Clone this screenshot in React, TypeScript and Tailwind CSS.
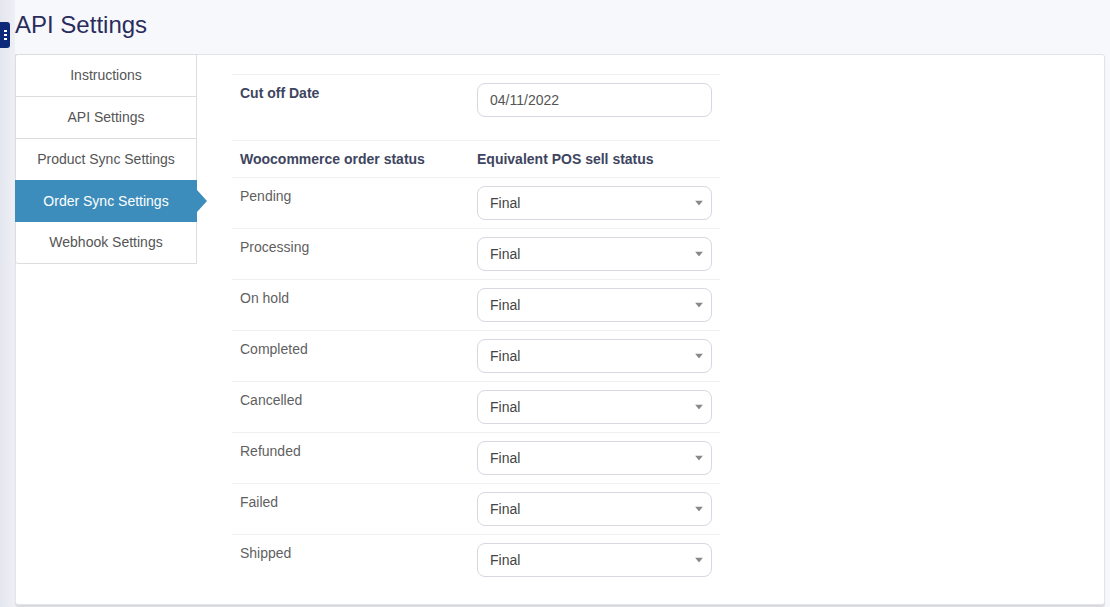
import React from "react";

const statuses = ["Pending", "Processing", "On hold", "Completed", "Cancelled", "Refunded", "Failed", "Shipped"];
const navItems = ["Instructions", "API Settings", "Product Sync Settings", "Order Sync Settings", "Webhook Settings"];

function Caret() {
  return (
    <svg width="8" height="5" viewBox="0 0 8 5" className="absolute right-[8px] top-1/2 -translate-y-1/2">
      <path d="M0 0 L8 0 L4 5 Z" fill="#888" />
    </svg>
  );
}

export default function App() {
  return (
    <div
      className="relative flex h-[607px] w-full overflow-hidden bg-[#f7f8fc] text-[14px]"
      style={{ fontFamily: '"Liberation Sans", Arial, sans-serif' }}
    >
      <div className="w-[15px] shrink-0 bg-gradient-to-r from-[#e4e6ee] to-[#eff0f6]" />
      <div className="absolute left-0 top-[22px] flex h-[26px] w-[10px] items-center justify-center rounded-r-[3px] bg-[#0d2a7a]">
        <div className="flex flex-col gap-[2px] pl-[1px]">
          <span className="block h-[2px] w-[3px] bg-white" />
          <span className="block h-[2px] w-[3px] bg-white" />
          <span className="block h-[2px] w-[3px] bg-white" />
        </div>
      </div>
      <div className="flex min-w-0 flex-1 flex-col pr-[5px]">
        <h1 className="h-[54px] pt-[11px] text-[24px] leading-[28px] text-[#2a2d5c]">API Settings</h1>
        <div className="flex h-[551px] rounded-[3px] border border-[#e3e4ea] bg-white shadow-[0_2px_1px_rgba(0,0,0,0.12)]">
          <div className="-mt-px w-[181px] shrink-0">
            {navItems.map((item, i) => {
              const active = item === "Order Sync Settings";
              return (
                <div
                  key={item}
                  className={
                    active
                      ? "relative -ml-px -mt-px flex h-[42px] items-center justify-center bg-[#3c8dbc] text-white"
                      : "-ml-px flex h-[43px] items-center justify-center border border-[#dddddd] text-[#555] " +
                        (i > 0 ? "-mt-px " : "") +
                        (i === navItems.length - 1 ? "rounded-bl-[3px]" : "")
                  }
                >
                  <span>{item}</span>
                  {active && (
                    <span className="absolute right-[-10px] top-1/2 h-0 w-0 -translate-y-1/2 border-y-[11px] border-l-[10px] border-y-transparent border-l-[#3c8dbc]" />
                  )}
                </div>
              );
            })}
          </div>
          <div className="flex-1 pl-[35px] pt-[19px]">
            <div className="w-[488px]">
              <div className="grid grid-cols-[237px_251px] border-t border-[#f0f0f0]">
                <div className="px-[8px] pt-[8px] font-bold leading-[20px] text-[#3e4560]">Cut off Date</div>
                <div className="px-[8px] pb-[23px] pt-[8px]">
                  <div className="flex h-[34px] items-center rounded-[8px] border border-[#d6d8e2] px-[12px] text-[#555]">
                    04/11/2022
                  </div>
                </div>
              </div>
              <div className="grid grid-cols-[237px_251px] border-t border-[#f0f0f0] font-bold leading-[20px] text-[#3e4560]">
                <div className="p-[8px]">Woocommerce order status</div>
                <div className="p-[8px]">Equivalent POS sell status</div>
              </div>
              {statuses.map((s) => (
                <div key={s} className="grid grid-cols-[237px_251px] border-t border-[#f0f0f0]">
                  <div className="px-[8px] pt-[8px] leading-[20px] text-[#5f5f5f]">{s}</div>
                  <div className="p-[8px]">
                    <div className="relative flex h-[34px] items-center rounded-[8px] border border-[#d6d8e2] px-[12px] text-[#444]">
                      Final
                      <Caret />
                    </div>
                  </div>
                </div>
              ))}
            </div>
          </div>
        </div>
      </div>
    </div>
  );
}
